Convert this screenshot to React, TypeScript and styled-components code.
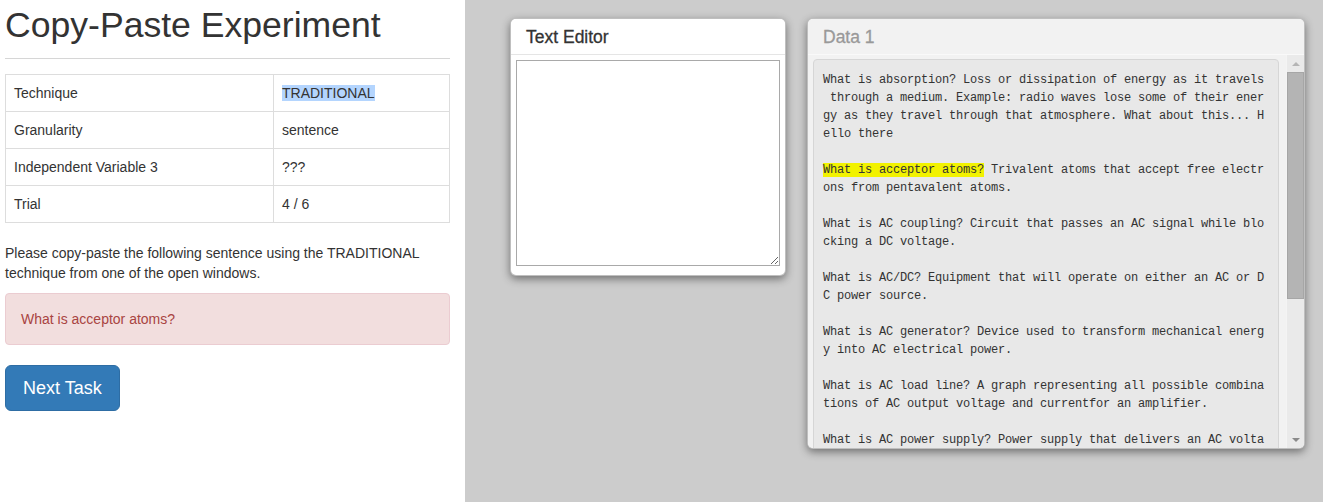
import React from "react";
import styled, { createGlobalStyle } from "styled-components";

const GlobalStyle = createGlobalStyle`
  html, body, #root { height: 100%; }
  body {
    margin: 0;
    font-family: "Liberation Sans", Arial, Helvetica, sans-serif;
    font-size: 14px;
    line-height: 20px;
    color: #333;
    background: #fff;
  }
  * { box-sizing: border-box; }
`;

const Page = styled.div`
  display: grid;
  grid-template-columns: 465px 1fr;
  height: 502px;
  overflow: hidden;
`;

const LeftPanel = styled.main`
  background: #fff;
  padding: 5px 15px 0 5px;
`;

const Title = styled.h1`
  margin: 0 0 13px;
  font-size: 35.6px;
  line-height: 40px;
  font-weight: 500;
  color: #333;
`;

const Divider = styled.hr`
  margin: 0 0 15px;
  border: 0;
  border-top: 1px solid #d6d6d6;
`;

const InfoTable = styled.table`
  width: 100%;
  border-collapse: collapse;
  border: 1px solid #ddd;
  margin-bottom: 20px;
`;

const Cell = styled.td<{ $label?: boolean }>`
  border: 1px solid #ddd;
  padding: 8px;
  line-height: 20px;
  width: ${(p) => (p.$label ? "268px" : "auto")};
`;

const Selected = styled.span`
  background: #b4d5fe;
`;

const Instructions = styled.p`
  margin: 0 0 10px;
`;

const Alert = styled.div`
  padding: 15px;
  margin-bottom: 20px;
  border: 1px solid #ebccd1;
  border-radius: 4px;
  background: #f2dede;
  color: #a94442;
`;

const PrimaryButton = styled.button`
  font-family: inherit;
  font-size: 18px;
  line-height: 24px;
  padding: 10px 17px;
  border-radius: 6px;
  border: 1px solid #2e6da4;
  background: #337ab7;
  color: #fff;
  cursor: pointer;
`;

const Desktop = styled.section`
  background: #cccccc;
  display: flex;
  align-items: flex-start;
  gap: 21px;
  padding: 18px 0 0 45px;
`;

const Window = styled.div<{ $w: number; $h: number }>`
  width: ${(p) => p.$w}px;
  height: ${(p) => p.$h}px;
  display: flex;
  flex-direction: column;
  background: #fff;
  border: 1px solid rgba(0, 0, 0, 0.25);
  border-radius: 6px;
  box-shadow: 0 3px 9px rgba(0, 0, 0, 0.45);
  overflow: hidden;
`;

const WindowHeader = styled.div<{ $muted?: boolean }>`
  height: 36px;
  flex: none;
  display: flex;
  align-items: center;
  padding: 0 15px;
  font-size: 17.5px;
  font-weight: normal;
  -webkit-text-stroke: 0.3px currentColor;
  background: ${(p) => (p.$muted ? "#f2f2f2" : "#fff")};
  color: ${(p) => (p.$muted ? "#999" : "#333")};
  border-bottom: 1px solid ${(p) => (p.$muted ? "#f9f9f9" : "#e5e5e5")};
`;

const EditorBody = styled.div`
  flex: 1;
  padding: 5px;
`;

const EditorArea = styled.textarea`
  display: block;
  width: 100%;
  height: 206px;
  border: 1px solid #a9a9a9;
  resize: both;
  font-family: "Liberation Mono", monospace;
  font-size: 13px;
  padding: 2px;
`;

const DataBody = styled.div`
  flex: 1;
  display: flex;
  min-height: 0;
  background: #f2f2f2;
`;

const ScrollArea = styled.div`
  flex: 1;
  overflow: hidden;
  padding: 4px 7px 0 5px;
`;

const DataBox = styled.div`
  background: #e8e8e8;
  border: 1px solid #d6d6d6;
  border-radius: 4px;
  padding: 11px 11px 9px 9px;
  font-family: "Liberation Mono", "DejaVu Sans Mono", monospace;
  font-size: 12px;
  line-height: 18px;
  letter-spacing: -0.2px;
  color: #333;
  white-space: break-spaces;
  word-break: break-all;
  line-break: anywhere;
`;

const Entry = styled.p`
  margin: 0 0 18px;
`;

const Highlight = styled.mark`
  background: #f2f200;
  color: inherit;
`;

const ScrollTrack = styled.div`
  width: 18px;
  flex: none;
  display: flex;
  flex-direction: column;
  background: #eaeaea;
  border-left: 1px solid #f4f4f4;
`;

const ArrowButton = styled.div<{ $down?: boolean }>`
  height: 17px;
  flex: none;
  display: flex;
  align-items: center;
  justify-content: center;
  &::before {
    content: "";
    width: 0;
    height: 0;
    border-left: 4px solid transparent;
    border-right: 4px solid transparent;
    ${(p) =>
      p.$down
        ? "border-top: 4px solid #8a8a8a;"
        : "border-bottom: 4px solid #b5b5b5;"}
  }
`;

const Thumb = styled.div`
  height: 227px;
  background: #b4b4b4;
  border: 1px solid #a6a6a6;
`;

const TrackRest = styled.div`
  flex: 1;
`;

const rows: [string, React.ReactNode][] = [
  ["Technique", <Selected>TRADITIONAL</Selected>],
  ["Granularity", "sentence"],
  ["Independent Variable 3", "???"],
  ["Trial", "4 / 6"],
];

const entries: { q: string; a: string; hl?: boolean }[] = [
  {
    q: "What is absorption?",
    a: " Loss or dissipation of energy as it travels through a medium. Example: radio waves lose some of their energy as they travel through that atmosphere. What about this... Hello there",
  },
  {
    q: "What is acceptor atoms?",
    a: " Trivalent atoms that accept free electrons from pentavalent atoms.",
    hl: true,
  },
  {
    q: "What is AC coupling?",
    a: " Circuit that passes an AC signal while blocking a DC voltage.",
  },
  {
    q: "What is AC/DC?",
    a: " Equipment that will operate on either an AC or DC power source.",
  },
  {
    q: "What is AC generator?",
    a: " Device used to transform mechanical energy into AC electrical power.",
  },
  {
    q: "What is AC load line?",
    a: " A graph representing all possible combinations of AC output voltage and currentfor an amplifier.",
  },
  {
    q: "What is AC power supply?",
    a: " Power supply that delivers an AC voltage to a load, such as the output of a transformer.",
  },
];

export default function App() {
  return (
    <>
      <GlobalStyle />
      <Page>
        <LeftPanel>
          <Title>Copy-Paste Experiment</Title>
          <Divider />
          <InfoTable>
            <tbody>
              {rows.map(([k, v]) => (
                <tr key={k}>
                  <Cell $label>{k}</Cell>
                  <Cell>{v}</Cell>
                </tr>
              ))}
            </tbody>
          </InfoTable>
          <Instructions>
            Please copy-paste the following sentence using the TRADITIONAL
            technique from one of the open windows.
          </Instructions>
          <Alert>What is acceptor atoms?</Alert>
          <PrimaryButton>Next Task</PrimaryButton>
        </LeftPanel>
        <Desktop>
          <Window $w={276} $h={258}>
            <WindowHeader>Text Editor</WindowHeader>
            <EditorBody>
              <EditorArea />
            </EditorBody>
          </Window>
          <Window $w={498} $h={431}>
            <WindowHeader $muted>Data 1</WindowHeader>
            <DataBody>
              <ScrollArea>
                <DataBox>
                  {entries.map((e) => (
                    <Entry key={e.q}>
                      {e.hl ? <Highlight>{e.q}</Highlight> : e.q}
                      {e.a}
                    </Entry>
                  ))}
                </DataBox>
              </ScrollArea>
              <ScrollTrack>
                <ArrowButton />
                <Thumb />
                <TrackRest />
                <ArrowButton $down />
              </ScrollTrack>
            </DataBody>
          </Window>
        </Desktop>
      </Page>
    </>
  );
}
